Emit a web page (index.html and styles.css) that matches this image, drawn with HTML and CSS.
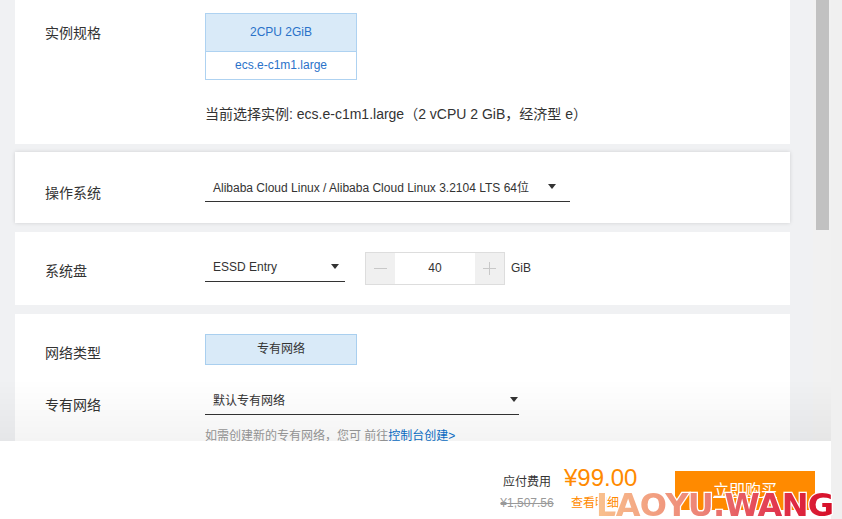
FILE: index.html
```html
<!DOCTYPE html>
<html>
<head>
	<meta charset="utf-8">
	<link rel="stylesheet" href="styles.css">
</head>
<body>
	<div class="main">
		<div class="card spec-card">
			<div class="row">
				<div class="label">实例规格</div>
				<div class="field">
					<div class="spec-box">
						<div class="spec-top">2CPU 2GiB</div>
						<div class="spec-bottom">ecs.e-c1m1.large</div>
					</div>
					<p class="current">当前选择实例: ecs.e-c1m1.large（2 vCPU 2 GiB，经济型 e）</p>
				</div>
			</div>
		</div>
		<div class="card raised">
			<div class="row">
				<div class="label label-os">操作系统</div>
				<div class="select select-os">Alibaba Cloud Linux / Alibaba Cloud Linux 3.2104 LTS 64位<span class="caret"></span></div>
			</div>
		</div>
		<div class="card">
			<div class="row">
				<div class="label label-disk">系统盘</div>
				<div class="select select-disk">ESSD Entry<span class="caret"></span></div>
				<div class="number">
					<span class="step"><i class="dash"></i></span>
					<span class="value">40</span>
					<span class="step"><i class="dash"></i><i class="dash upright"></i></span>
				</div>
				<span class="unit">GiB</span>
			</div>
		</div>
		<div class="card net-card">
			<div class="row">
				<div class="label label-net">网络类型</div>
				<div class="option">专有网络</div>
			</div>
			<div class="row vpc-row">
				<div class="label">专有网络</div>
				<div class="field">
					<div class="select select-vpc">默认专有网络<span class="caret"></span></div>
					<p class="hint">如需创建新的专有网络，您可 前往<a class="link">控制台创建&gt;</a></p>
				</div>
			</div>
		</div>
	</div>
	<div class="scroll-track"><div class="scroll-thumb"></div></div>
	<div class="side"></div>

	<div class="fade"></div>
	<div class="footer">
		<div class="cost">
			<div class="cost-title">应付费用</div>
			<div class="cost-old">¥1,507.56</div>
		</div>
		<div class="price">
			<div class="price-now">¥99.00</div>
			<div class="price-detail">查看明细</div>
		</div>
		<div class="buy">立即购买</div>
		<svg class="watermark" width="244" height="42" viewBox="0 0 244 42">
			<defs>
				<linearGradient id="wm" x1="0" y1="0" x2="1" y2="0">
					<stop offset="0" stop-color="#f9c28e"/>
					<stop offset="0.45" stop-color="#ec8276"/>
					<stop offset="0.75" stop-color="#e2384f"/>
					<stop offset="1" stop-color="#d60d27"/>
				</linearGradient>
			</defs>
			<text x="2" y="37" textLength="238" lengthAdjust="spacing" class="wm-text" fill="url(#wm)">LAOYU.WANG</text>
		</svg>
	</div>
</body>
</html>
```

FILE: styles.css
```css
html, body {
	margin: 0;
	padding: 0;
	height: 100%;
	overflow: hidden;
}
body {
	display: grid;
	grid-template-columns: 813px 18px 1fr;
	background-color: #f0f1f3;
	color: #333;
	font-family: "Liberation Sans", "Noto Sans CJK SC", sans-serif;
	font-size: 12px;
}
.main {
	padding-left: 15px;
	width: 775px;
}
.card {
	background-color: #fff;
	padding: 20px 30px;
	margin-bottom: 9px;
}
.spec-card {
	padding: 13px 30px 20px;
	margin-bottom: 8px;
}
.raised {
	box-shadow: 0 0 4px rgba(0, 0, 0, 0.14);
}
.net-card {
	padding-bottom: 74px;
	margin-bottom: 0;
}
.row {
	display: flex;
	align-items: flex-start;
}
.vpc-row {
	margin-top: 20px;
}
.label {
	width: 160px;
	flex: none;
	font-size: 14px;
	line-height: 20px;
	padding-top: 10px;
}
.label-os {
	padding-top: 11px;
}
.label-disk, .label-net {
	padding-top: 9px;
}
.field {
	display: flex;
	flex-direction: column;
}

/* instance spec */
.spec-box {
	width: 150px;
	border: 1px solid #aed2f1;
	color: #2a72c9;
	text-align: center;
}
.spec-top {
	height: 37px;
	line-height: 37px;
	background-color: #d9eaf8;
	border-bottom: 1px solid #aed2f1;
}
.spec-bottom {
	height: 27px;
	line-height: 27px;
}
.current {
	margin: 24px 0 0;
	font-size: 14px;
	line-height: 20px;
}

/* selects */
.select {
	display: flex;
	align-items: center;
	height: 29px;
	border-bottom: 1px solid #333;
	padding-left: 8px;
	box-sizing: content-box;
}
.select-os {
	width: 343px;
	padding-right: 14px;
}
.select-disk {
	width: 126px;
	padding-right: 6px;
}
.select-vpc {
	width: 305px;
	padding-right: 1px;
}
.caret {
	margin-left: auto;
	width: 0;
	height: 0;
	border-left: 4.5px solid transparent;
	border-right: 4.5px solid transparent;
	border-top: 5px solid #333;
}

/* number input */
.number {
	display: flex;
	margin-left: 20px;
	height: 31px;
	width: 138px;
	border: 1px solid #ddd;
}
.step {
	position: relative;
	width: 29px;
	background-color: #f0f0f0;
}
.dash {
	position: absolute;
	left: 8px;
	top: 15px;
	width: 13px;
	height: 1px;
	background-color: #c8c8c8;
}
.dash.upright {
	left: 14px;
	top: 9px;
	width: 1px;
	height: 13px;
}
.value {
	flex: 1;
	text-align: center;
	line-height: 31px;
}
.unit {
	margin-left: 6px;
	line-height: 33px;
}

/* network */
.option {
	width: 150px;
	height: 29px;
	line-height: 29px;
	border: 1px solid #a9cfef;
	background-color: #d9eaf8;
	text-align: center;
}
.hint {
	margin: 13px 0 0;
	line-height: 16px;
	color: #999;
}
.link {
	color: #0a6fc9;
}

/* scrollbar */
.scroll-track {
	background-color: #f1f1f1;
	padding: 0 2px 0 3px;
}
.scroll-thumb {
	height: 230px;
	background-color: #c1c1c1;
}
.side {
	background-color: #f0f0f0;
}

/* footer */
.fade {
	position: fixed;
	left: 0;
	bottom: 78px;
	width: 831px;
	height: 62px;
	background: linear-gradient(rgba(0, 0, 0, 0), rgba(0, 0, 0, 0.045));
}
.footer {
	position: fixed;
	left: 0;
	bottom: 0;
	width: 831px;
	height: 78px;
	box-sizing: border-box;
	padding-right: 16px;
	background-color: #fff;
	display: flex;
	justify-content: flex-end;
	align-items: flex-start;
}
.cost {
	width: 54px;
	margin: 32px 10px 0 0;
	text-align: center;
	line-height: 18px;
}
.cost-old {
	margin-top: 3px;
	color: #999;
	text-decoration: line-through;
}
.price {
	width: 76px;
	margin: 23px 35px 0 0;
	color: #ff8a00;
}
.price-now {
	font-size: 24px;
	line-height: 28px;
}
.price-detail {
	margin: 2px 0 0 7px;
	line-height: 18px;
}
.buy {
	width: 140px;
	height: 39px;
	margin-top: 30px;
	line-height: 39px;
	background-color: #ff8a00;
	color: #fff;
	font-size: 16px;
	text-align: center;
	text-decoration: underline;
}
.watermark {
	position: absolute;
	left: 594px;
	top: 38px;
}
.wm-text {
	font-family: "DejaVu Sans", sans-serif;
	font-weight: bold;
	font-size: 32px;
	stroke: #fff;
	stroke-width: 2.5px;
	paint-order: stroke;
}
```
